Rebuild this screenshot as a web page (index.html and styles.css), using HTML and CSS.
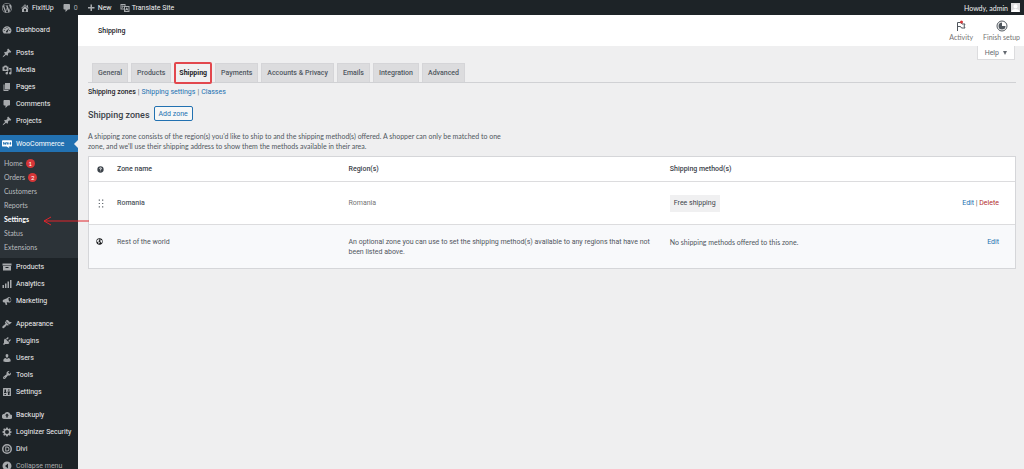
FILE: index.html
```html
<!DOCTYPE html>
<html lang="en">
<head>
<meta charset="utf-8">
<title>Shipping zones</title>
<link rel="stylesheet" href="styles.css">
</head>
<body>
<svg class="sprite" aria-hidden="true">
  <symbol id="wp" viewBox="0 0 20 20"><path d="M20 10c0-5.51-4.49-10-10-10C4.48 0 0 4.49 0 10c0 5.52 4.48 10 10 10 5.51 0 10-4.48 10-10zM7.780 15.370L4.370 6.220c.55-.02 1.170-.08 1.170-.08.5-.06.44-1.130-.06-1.110 0 0-1.450.11-2.370.11-.18 0-.37 0-.58-.01C4.120 2.690 6.870 1.110 10 1.110c2.330 0 4.450.87 6.050 2.340-.68-.11-1.650.39-1.650 1.580 0 .74.45 1.360.9 2.100.35.61.55 1.360.55 2.460 0 1.490-1.400 5-1.400 5l-3.030-8.370c.54-.02.82-.17.82-.17.5-.05.44-1.250-.06-1.220 0 0-1.440.12-2.380.12-.87 0-2.330-.12-2.330-.12-.5-.03-.56 1.200-.06 1.220l.92.08 1.260 3.410zM17.410 10c.24-.64.74-1.870.43-4.250.7 1.290 1.050 2.710 1.050 4.250 0 3.290-1.730 6.240-4.400 7.780.97-2.590 1.940-5.200 2.920-7.780zM6.100 18.090C3.120 16.650 1.110 13.530 1.110 10c0-1.300.23-2.480.72-3.590C3.250 10.300 4.670 14.200 6.100 18.090zm4.030-6.630l2.580 6.980c-.86.29-1.760.45-2.710.45-.79 0-1.570-.11-2.290-.33.81-2.380 1.620-4.740 2.420-7.100z"/></symbol>
  <symbol id="home" viewBox="0 0 20 20"><path fill-rule="evenodd" d="M16 8.500l1.530 1.530-1.060 1.060L10 4.600l-6.470 6.490-1.060-1.060L10 2.500l4 4v-2h2v4zm-6-2.460l6 5.990V18H4v-5.970zM12 17v-5H8v5h4z"/></symbol>
  <symbol id="comment" viewBox="0 0 20 20"><path d="M5 2h9c1.100 0 2 .9 2 2v7c0 1.100-.9 2-2 2h-2l-5 5v-5H5c-1.100 0-2-.9-2-2V4c0-1.100.9-2 2-2z"/></symbol>
  <symbol id="plus" viewBox="0 0 20 20"><path d="M17 8v3h-5v5H9v-5H4V8h5V3h3v5h5z"/></symbol>
  <symbol id="translate" viewBox="0 0 20 20"><path fill-rule="evenodd" d="M1 2h10v4h8v12H8v-5H1V2zm2 2v7h5V6h1V4H3zm7 4v8h7V8h-7z"/><path d="M4 5h3v1h2v1H7L5 10 4 9l1-2H3V6h1zM13 9h1l3 6h-2l-.5-1h-2l-.5 1h-2z"/></symbol>
  <symbol id="gauge" viewBox="0 0 20 20"><path fill-rule="evenodd" d="M3.760 17h12.480A8.500 8.500 0 1 0 3.760 17zM10 4a1 1 0 1 1 0 2 1 1 0 0 1 0-2zM6 6a1 1 0 1 1 0 2 1 1 0 0 1 0-2zm8.500.2l-3 6.800a1.700 1.700 0 1 1-2.300-1.300zM4.500 10a1 1 0 1 1 0 2 1 1 0 0 1 0-2zm11 0a1 1 0 1 1 0 2 1 1 0 0 1 0-2z"/></symbol>
  <symbol id="pin" viewBox="0 0 20 20"><path d="M10.440 3.020l1.820-1.820 6.360 6.350-1.830 1.820c-1.050-.68-2.480-.57-3.410.36l-.75.75c-.92.93-1.040 2.350-.35 3.410l-1.830 1.820-2.410-2.410-2.800 2.790c-.42.42-3.380 2.710-3.800 2.290s1.860-3.390 2.280-3.810l2.790-2.790L4.100 9.360l1.830-1.820c1.050.69 2.480.57 3.400-.36l.75-.75c.93-.92 1.050-2.350.36-3.410z"/></symbol>
  <symbol id="media" viewBox="0 0 20 20"><path fill-rule="evenodd" d="M13 11V4c0-.55-.45-1-1-1h-1.670L9 1H5L3.670 3H2c-.55 0-1 .45-1 1v7c0 .55.45 1 1 1h10c.55 0 1-.45 1-1zM7 4.500a2.500 2.500 0 1 1 0 5 2.500 2.500 0 0 1 0-5zM14 6h5v10.500a2.500 2.500 0 1 1-2-2.450V9h-3V6zm-4 8.050V13h2v3.500a2.500 2.500 0 1 1-2-2.450z"/></symbol>
  <symbol id="pages" viewBox="0 0 20 20"><path d="M6 15V2h10v13H6zm-1 1h8v2H3V5h2v11z"/></symbol>
  <symbol id="woo" viewBox="0 1 24 22"><path fill-rule="evenodd" d="M2 3h20a2 2 0 0 1 2 2v11a2 2 0 0 1-2 2h-6l2 4-7-4H2a2 2 0 0 1-2-2V5a2 2 0 0 1 2-2zm0 4l1.500 7h2L7 11l1 3h2l1.500-7h-2L9 10 8 8H6.500L5 11 4 7zm12 0c-2 1-3 6 0 7 2.500-.5 3-6.500 0-7zm6 0c-2 1-3 6 0 7 2.500-.5 3-6.500 0-7z"/></symbol>
  <symbol id="archive" viewBox="0 0 20 20"><path fill-rule="evenodd" d="M1 3h18v4H1zm1 5h16v9H2zm5 2v2h6v-2z"/></symbol>
  <symbol id="bars" viewBox="0 0 20 20"><path d="M1 12h3v6H1zm5-3h3v9H6zm5-4h3v13h-3zm5-3h3v16h-3z"/></symbol>
  <symbol id="mega" viewBox="0 0 20 20"><path fill-rule="evenodd" d="M18.150 5.940c.46 1.620.38 3.220-.02 4.480-.42 1.280-1.260 2.180-2.300 2.480-1.500.45-3.300-.2-4.700-.3l-1.800.1 1 4.100c.1.400-.1.600-.4.700l-1.900.5c-.3.100-.6 0-.7-.4l-1.300-4.500C4 13.400 2 12.700 1.500 10.900c-.5-1.700.5-3.300 2.300-3.800L10 4.700c1.300-.8 2.300-2.300 3.800-2.700 1.900-.5 3.700 1.500 4.350 3.940zm-3.900-2.400c-1.200.4-1.600 2.400-.9 4.500.5 2.100 2 3.500 3.100 3.100 1.200-.3 1.500-2.400.9-4.500-.6-2-1.900-3.400-3.100-3.100z"/></symbol>
  <symbol id="brush" viewBox="0 0 20 20"><path d="M14.480 11.060L7.410 3.990l1.500-1.500c.5-.56 2.300-.47 3.510.32 1.210.8 1.430 1.280 2 2.100 1.180 1.640 2.530 1.160 3.940 1.270 1.100.08.59 1.330.14 1.880zM6.700 4.700l7.070 7.070-.9.900c-.63.630-1.740.610-2.460-.09l-.74-.74c-1.200 1.200-2.700 3.400-4.200 4.900-1.800 1.900-3 2.300-4.200 1.100s-.8-2.500 1.100-4.200c1.500-1.500 3.700-3 4.900-4.200l-.74-.74c-.7-.72-.72-1.830-.09-2.460z"/></symbol>
  <symbol id="plug" viewBox="0 0 20 20"><path d="M13.110 4.360L9.870 7.600 8 5.730l3.240-3.240c.35-.34 1.050-.2 1.560.32.52.51.66 1.210.31 1.550zm-8 1.770l.91-1.120 9.010 9.010-1.190.84c-.71.71-2.630 1.160-3.820 1.160H6.140L4.900 17.260c-.59.59-1.540.59-2.120 0-.59-.58-.59-1.530 0-2.120L4 13.900V10.100c0-1.190.42-3.260 1.110-3.970zm7.260 3.970l3.240-3.240c.34-.35 1.040-.21 1.550.31.52.51.66 1.210.31 1.550l-3.240 3.250z"/></symbol>
  <symbol id="user" viewBox="0 0 20 20"><path d="M10 9.250c-2.270 0-2.730-3.440-2.730-3.440C7 4.020 7.820 2 9.970 2c2.160 0 2.980 2.020 2.710 3.810 0 0-.41 3.440-2.680 3.440zm0 2.570L12.720 10c2.390 0 4.520 2.330 4.520 4.530v2.490s-3.650 1.130-7.240 1.130c-3.650 0-7.240-1.130-7.240-1.130v-2.490c0-2.250 1.940-4.480 4.470-4.480z"/></symbol>
  <symbol id="wrench" viewBox="0 0 20 20"><path fill-rule="evenodd" d="M16.680 9.770c-1.340 1.340-3.300 1.670-4.950.99l-5.410 6.520c-.99.99-2.590.99-3.580 0s-.99-2.590 0-3.570l6.520-5.420c-.68-1.650-.35-3.610.99-4.950 1.280-1.280 3.120-1.620 4.720-1.060l-2.890 2.890 2.820 2.820 2.860-2.870c.53 1.580.18 3.390-1.080 4.650zM3.810 16.210c.4.39 1.040.39 1.430 0 .4-.4.4-1.040 0-1.430-.39-.4-1.030-.4-1.430 0-.39.39-.39 1.030 0 1.430z"/></symbol>
  <symbol id="sliders" viewBox="0 0 20 20"><path fill-rule="evenodd" d="M3 2h14a1 1 0 0 1 1 1v14a1 1 0 0 1-1 1H3a1 1 0 0 1-1-1V3a1 1 0 0 1 1-1zm2 3v5H4v2h5v-2H8V5zm0 9v2h3v-2zm7-9v2h3V5zm0 6v5h3v-5h1V9h-5v2z"/></symbol>
  <symbol id="cloud" viewBox="0 0 20 20"><path fill-rule="evenodd" d="M16.500 9A6 6 0 0 0 5 7.500 5 5 0 0 0 5 18h11a4.500 4.500 0 0 0 .5-9zM10 7l4 4h-2.500v4h-3v-4H6z"/></symbol>
  <symbol id="gear" viewBox="0 0 20 20"><path fill-rule="evenodd" d="M8.500 1h3l.5 2.500 1.500.6 2.100-1.500 2.100 2.100-1.500 2.100.6 1.500L19 8.500v3l-2.200.5-.6 1.500 1.500 2.100-2.100 2.100-2.100-1.500-1.500.6-.5 2.200h-3L8 16.800l-1.500-.6-2.100 1.500-2.100-2.100 1.500-2.100-.6-1.500L1 11.500v-3L3.200 8l.6-1.500-1.500-2.100 2.100-2.100 2.100 1.500L8 3.200zM10 6a4 4 0 1 0 0 8 4 4 0 0 0 0-8z"/></symbol>
  <symbol id="divi" viewBox="0 0 20 20"><path fill-rule="evenodd" d="M10 0a10 10 0 1 1 0 20 10 10 0 0 1 0-20zm0 3a7 7 0 1 0 0 14 7 7 0 0 0 0-14zM6.500 5H10a5 5 0 0 1 0 10H6.500zm2 2v6H10a3 3 0 0 0 0-6z"/></symbol>
  <symbol id="collapse" viewBox="0 0 20 20"><path fill-rule="evenodd" d="M10 1a9 9 0 1 1 0 18 9 9 0 0 1 0-18zm2 4l-6 5 6 5z"/></symbol>
  <symbol id="flag" viewBox="0 0 24 24"><path d="M5 22V5h7l2 3h6l-2 4 2 4h-7l-2-3H5" fill="none" stroke="currentColor" stroke-width="2"/><circle cx="13" cy="4" r="3" fill="#d63638"/></symbol>
  <symbol id="progress" viewBox="0 0 24 24"><circle cx="12" cy="12" r="10" fill="none" stroke="currentColor" stroke-width="2"/><path d="M12 5v7h7a7 7 0 1 1-7-7z"/></symbol>
  <symbol id="help" viewBox="0 0 20 20"><path fill-rule="evenodd" d="M10 1a9 9 0 1 1 0 18 9 9 0 0 1 0-18zM6.500 8h2c0-3 3.500-2 2.500-.2-.5 1-2 1.500-2 3.700h2c0-1.500 2.500-2 2.500-4.200C13.500 3 6.500 3 6.500 8zM9 13v2.200h2V13z"/></symbol>
  <symbol id="grip" viewBox="0 0 10 16"><path d="M1 1h2v2H1zm6 0h2v2H7zM1 7h2v2H1zm6 0h2v2H7zM1 13h2v2H1zm6 0h2v2H7z"/></symbol>
  <symbol id="globe" viewBox="0 0 20 20"><path fill-rule="evenodd" d="M10 1a9 9 0 1 1 0 18 9 9 0 0 1 0-18zM4 5L2.500 9 5 12l2 .5V16l1 1.500 2-3.500 1-2-3-2-2-.5 2-2 2-2-1-3zm9-1.500l-1 3 1.500 2L12 11l2 1v3l3-3 .5-4z"/></symbol>
</svg>

<header class="adminbar">
  <a href="#" aria-label="WordPress"><svg class="icon"><use href="#wp"/></svg></a>
  <a href="#"><svg class="icon"><use href="#home"/></svg>FixItUp</a>
  <a href="#" class="count"><svg class="icon"><use href="#comment"/></svg>0</a>
  <a href="#"><svg class="icon"><use href="#plus"/></svg>New</a>
  <a href="#"><svg class="icon"><use href="#translate"/></svg>Translate Site</a>
  <a href="#" class="account">Howdy, admin<svg class="avatar" viewBox="0 0 20 20"><path fill="#dcdcde" d="M0 0h20v20H0z"/><path fill="#fff" d="M10 3a4.500 4.500 0 1 1 0 9 4.500 4.500 0 0 1 0-9zM1 20c1-9 17-9 18 0z"/></svg></a>
</header>

<div class="layout">
  <nav class="sidebar" aria-label="Main menu">
    <ul class="menu">
      <li><a href="#"><svg class="icon"><use href="#gauge"/></svg>Dashboard</a></li>
      <li class="group"><a href="#"><svg class="icon"><use href="#pin"/></svg>Posts</a></li>
      <li><a href="#"><svg class="icon"><use href="#media"/></svg>Media</a></li>
      <li><a href="#"><svg class="icon"><use href="#pages"/></svg>Pages</a></li>
      <li><a href="#"><svg class="icon"><use href="#comment"/></svg>Comments</a></li>
      <li><a href="#"><svg class="icon"><use href="#pin"/></svg>Projects</a></li>
      <li class="group">
        <a href="#" class="current"><svg class="icon"><use href="#woo"/></svg>WooCommerce</a>
        <ul class="submenu">
          <li><a href="#">Home <span class="badge">1</span></a></li>
          <li><a href="#">Orders <span class="badge">2</span></a></li>
          <li><a href="#">Customers</a></li>
          <li><a href="#">Reports</a></li>
          <li class="pointed"><a href="#" class="active">Settings</a>
            <svg class="arrow" viewBox="0 0 46 10" aria-hidden="true"><path d="M46 5H1M8 1L1 5l7 4"/></svg></li>
          <li><a href="#">Status</a></li>
          <li><a href="#">Extensions</a></li>
        </ul>
      </li>
      <li><a href="#"><svg class="icon"><use href="#archive"/></svg>Products</a></li>
      <li><a href="#"><svg class="icon"><use href="#bars"/></svg>Analytics</a></li>
      <li><a href="#"><svg class="icon"><use href="#mega"/></svg>Marketing</a></li>
      <li class="group"><a href="#"><svg class="icon"><use href="#brush"/></svg>Appearance</a></li>
      <li><a href="#"><svg class="icon"><use href="#plug"/></svg>Plugins</a></li>
      <li><a href="#"><svg class="icon"><use href="#user"/></svg>Users</a></li>
      <li><a href="#"><svg class="icon"><use href="#wrench"/></svg>Tools</a></li>
      <li><a href="#"><svg class="icon"><use href="#sliders"/></svg>Settings</a></li>
      <li class="group"><a href="#"><svg class="icon"><use href="#cloud"/></svg>Backuply</a></li>
      <li><a href="#"><svg class="icon"><use href="#gear"/></svg>Loginizer Security</a></li>
      <li><a href="#"><svg class="icon"><use href="#divi"/></svg>Divi</a></li>
      <li><button type="button" class="collapse"><svg class="icon"><use href="#collapse"/></svg>Collapse menu</button></li>
    </ul>
  </nav>

  <div class="page">
    <div class="topbar">
      <h1>Shipping</h1>
      <div class="tools">
        <button type="button"><svg class="tool-icon"><use href="#flag"/></svg>Activity</button>
        <button type="button"><svg class="tool-icon"><use href="#progress"/></svg>Finish setup</button>
      </div>
    </div>
    <div class="helpbar"><button type="button" class="help">Help <span class="caret"></span></button></div>

    <main class="content">
      <nav class="tabs" aria-label="Settings sections">
        <a href="#">General</a>
        <a href="#">Products</a>
        <a href="#" class="selected">Shipping</a>
        <a href="#">Payments</a>
        <a href="#">Accounts &amp; Privacy</a>
        <a href="#">Emails</a>
        <a href="#">Integration</a>
        <a href="#">Advanced</a>
      </nav>
      <nav class="sections" aria-label="Shipping sections">
        <a href="#" class="active">Shipping zones</a><span>|</span><a href="#">Shipping settings</a><span>|</span><a href="#">Classes</a>
      </nav>
      <div class="heading">
        <h2>Shipping zones</h2>
        <button type="button" class="add">Add zone</button>
      </div>
      <p class="intro">A shipping zone consists of the region(s) you'd like to ship to and the shipping method(s) offered. A shopper can only be matched to one zone, and we'll use their shipping address to show them the methods available in their area.</p>

      <table class="zones">
        <colgroup><col class="c-icon"><col class="c-name"><col class="c-region"><col class="c-method"><col class="c-action"></colgroup>
        <thead>
          <tr>
            <th class="mark"><svg class="small" role="img" aria-label="Help"><use href="#help"/></svg></th>
            <th>Zone name</th><th>Region(s)</th><th colspan="2">Shipping method(s)</th>
          </tr>
        </thead>
        <tbody>
          <tr>
            <td class="mark"><svg class="grip" role="img" aria-label="Reorder"><use href="#grip"/></svg></td>
            <td class="name">Romania</td><td class="muted">Romania</td>
            <td><span class="method">Free shipping</span></td>
            <td class="actions"><a href="#">Edit</a> | <a href="#" class="delete">Delete</a></td>
          </tr>
          <tr class="rest">
            <td class="mark"><svg class="small globe" role="img" aria-label="World"><use href="#globe"/></svg></td>
            <td>Rest of the world</td>
            <td>An optional zone you can use to set the shipping method(s) available to any regions that have not been listed above.</td>
            <td class="none">No shipping methods offered to this zone.</td>
            <td class="actions"><a href="#">Edit</a></td>
          </tr>
        </tbody>
      </table>
    </main>
  </div>
</div>
</body>
</html>
```
FILE: styles.css
```css
* { box-sizing: border-box; }

body {
  display: flex;
  flex-direction: column;
  height: 100vh;
  margin: 0;
  overflow: hidden;
  background: #efeff0;
  color: #50575e;
  font: 7px/10px Roboto, "Open Sans", sans-serif;
}

a { color: #2271b1; text-decoration: none; }
button { font: inherit; color: inherit; cursor: pointer; }
ul { list-style: none; margin: 0; padding: 0; }
svg { display: block; flex: none; fill: currentColor; }
.sprite { display: none; }
.icon { width: 10px; height: 10px; color: #a7aaad; }

/* Secondary text uses the narrower face */
.account, .submenu, .tools, .intro, .none { font-family: Lato, Roboto, sans-serif; }

/* Admin bar */
.adminbar {
  display: flex;
  align-items: center;
  gap: 8px;
  height: 15px;
  flex: none;
  padding: 0 4px 0 2px;
  background: #1d2327;
}
.adminbar a { display: flex; align-items: center; gap: 2px; color: #f0f0f1; }
.adminbar .count { color: #a7aaad; }
.adminbar .account { margin-left: auto; gap: 3px; }
.avatar { width: 9px; height: 9px; }

.layout { display: flex; flex: 1; min-height: 0; }

/* Sidebar */
.sidebar { flex: none; width: 78px; padding-top: 6px; background: #1d2327; }
.menu a, .collapse { display: flex; align-items: center; gap: 4px; height: 17px; padding: 0 2px; color: #f0f0f1; white-space: nowrap; }
.menu .group { margin-top: 6px; }
.menu .current { position: relative; background: #2271b1; color: #fff; }
.current .icon { color: #fff; }
.current::after {
  content: "";
  position: absolute;
  right: 0;
  border: 4px solid transparent;
  border-right-color: #efeff0;
  border-left: 0;
}
.menu .collapse { background: none; border: 0; color: #a7aaad; }
.submenu { padding: 4px 0; background: #2c3338; }
.submenu a { height: 14px; padding: 0 4px; gap: 3px; color: #b9bcbf; }
.submenu .active { color: #fff; font-weight: 700; }
.badge {
  width: 9px;
  height: 9px;
  border-radius: 50%;
  background: #d63638;
  color: #fff;
  font-size: 6px;
  line-height: 9px;
  text-align: center;
}
.pointed { position: relative; }
.arrow {
  position: absolute;
  top: 4px;
  left: 43px;
  width: 46px;
  height: 10px;
  fill: none;
  stroke: #e0242b;
}

/* Page header */
.page { flex: 1; min-width: 0; }
.topbar {
  display: flex;
  align-items: center;
  justify-content: space-between;
  height: 31px;
  padding: 0 4px 0 20px;
  background: #fff;
}
h1 { margin: 0; font-size: 7px; font-weight: 500; color: #1d2327; }
.tools { display: flex; gap: 10px; color: #757575; }
.tools button { display: flex; flex-direction: column; align-items: center; padding: 0; border: 0; background: none; }
.tool-icon { width: 12px; height: 12px; color: #50575e; }
.helpbar { display: flex; justify-content: flex-end; padding-right: 9px; }
.help {
  display: flex;
  align-items: center;
  gap: 4px;
  height: 14px;
  padding: 0 7px;
  border: 1px solid #dcdcde;
  border-top: 0;
  background: #fff;
  color: #646970;
}
.caret { border: 2px solid transparent; border-top: 4px solid #646970; border-bottom: 0; }

/* Settings */
.content { padding: 2px 8px 0 10px; }
.tabs { display: flex; align-items: flex-end; gap: 3px; padding-left: 4px; border-bottom: 1px solid #d0d1d4; }
.tabs a {
  height: 19px;
  padding: 0 5px;
  border: 1px solid #d5d5d8;
  border-bottom: 0;
  background: #dcdcde;
  color: #50575e;
  font-weight: 500;
  line-height: 19px;
}
.tabs .selected {
  height: 22px;
  padding: 0 3px;
  margin-bottom: -2px;
  border: 2px solid #e2474d;
  border-radius: 2px;
  background: #f0f0f1;
  color: #1d2327;
  font-weight: 700;
  line-height: 18px;
}
.sections { display: flex; gap: 2px; padding-top: 4px; color: #646970; }
.sections .active { color: #1d2327; font-weight: 500; }
.heading { display: flex; align-items: flex-end; gap: 4px; padding-top: 9px; }
h2 { margin: 0; font-size: 9px; line-height: 12px; font-weight: 500; color: #3c434a; }
.add { height: 15px; padding: 0 4px; border: 1px solid #2271b1; border-radius: 2px; background: #f6f7f7; color: #2271b1; line-height: 12px; }
.intro { max-width: 420px; margin: 10px 0 5px; }

/* Zones */
.zones {
  width: 100%;
  table-layout: fixed;
  border-collapse: separate;
  border-spacing: 0;
  border: 1px solid #d5d6d9;
  background: #fff;
}
.c-icon { width: 25px; }
.c-name { width: 25%; }
.c-region { width: 34.7%; }
.c-action { width: 60px; }
th, td { padding: 0 3px; text-align: left; vertical-align: middle; }
th { height: 24px; color: #3c434a; font-weight: 500; }
td { height: 43px; border-top: 1px solid #dcdcde; }
.rest td { padding-top: 12px; padding-bottom: 11px; background: #f8f9fb; vertical-align: top; }
.mark svg { margin: 0 auto; }
.zones .mark { padding: 0 4px 0 2px; }
.zones .rest .mark { padding: 13px 6px 0 2px; }
.small { width: 7px; height: 7px; }
.globe { color: #101214; }
.grip { width: 6px; height: 9px; }
.name { font-weight: 500; }
.muted { color: #757575; }
.method { display: inline-block; height: 17px; padding: 0 4px; background: #f0f0f1; color: #3c434a; line-height: 17px; }
.zones .actions { padding-right: 16px; text-align: right; white-space: nowrap; }
.delete { color: #b32d2e; }
```
